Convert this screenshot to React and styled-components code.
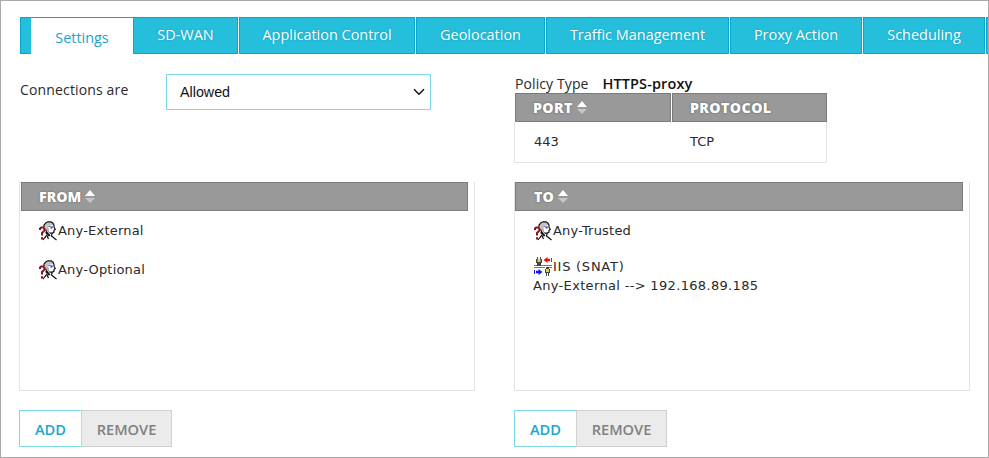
import React from "react";
import styled, { createGlobalStyle } from "styled-components";

const Global = createGlobalStyle`
  * { box-sizing: border-box; }
  body { margin: 0; background: #fff; overflow: hidden; }
`;

const Page = styled.main`
  width: 989px;
  height: 458px;
  border: 1px solid #a9a9a9;
  padding: 16px 0 0 18px;
  overflow: hidden;
  background: #fff;
  color: #2a2a2a;
  font: 14px "Open Sans", sans-serif;
`;

const TabBar = styled.nav`
  display: flex;
  height: 38px;
  padding-left: 1px;
  overflow: hidden;
`;

const TabEdge = styled.span`
  flex: none;
  width: ${(p) => p.$w}px;
  height: 37px;
  background: #26bfdb;
  border: 1px solid #08a5cc;
  border-right: 0;
`;

const Tab = styled.button`
  flex: none;
  width: ${(p) => p.$w}px;
  height: ${(p) => (p.$active ? 38 : 37)}px;
  margin: 0 ${(p) => p.$gap || 0}px 0 0;
  padding: ${(p) => (p.$active ? "1px 0 0" : "0 0 3px 0")};
  border: 1px solid #08a5cc;
  border-width: ${(p) => (p.$active ? "1px 0 0" : "1px")};
  background: ${(p) => (p.$active ? "#fff" : "#26bfdb")};
  color: ${(p) => (p.$active ? "#1aa5c8" : "#fff")};
  font: ${(p) => (p.$active ? 400 : 500)} 14.45px "Open Sans", sans-serif;
  white-space: nowrap;
  text-shadow: ${(p) => (p.$active ? "none" : "0 0 2px #1295b5")};
`;

const Columns = styled.div`
  display: grid;
  grid-template-columns: 495px 456px;
`;

const ConnectionRow = styled.div`
  display: flex;
  height: 127px;
  padding-top: 19px;
`;

const Label = styled.label`
  width: 147px;
  padding-left: 1px;
  line-height: 31px;
  letter-spacing: 0.15px;
`;

const SelectBox = styled.div`
  display: flex;
  align-items: center;
  justify-content: space-between;
  width: 265px;
  height: 36px;
  padding: 0 5px 1px 13px;
  border: 1px solid #7cd8e6;
  color: #111;
  font: 14.3px "Liberation Sans", Arial, sans-serif;
`;

const Policy = styled.div`
  height: 127px;
  padding-top: 20px;
`;

const PolicyType = styled.div`
  display: flex;
  gap: 14px;
  height: 18px;
  padding-left: 1px;
  line-height: 18px;
  letter-spacing: 0.1px;
  strong { font-weight: 600; font-size: 14.5px; color: #111; }
`;

const HeadRow = styled.div`
  display: flex;
  gap: 1px;
  width: ${(p) => p.$w}px;
  height: ${(p) => p.$h}px;
  margin-left: ${(p) => p.$inset || 0}px;
`;

const HeadCell = styled.div`
  display: flex;
  align-items: center;
  gap: 4px;
  width: ${(p) => p.$w};
  padding: 0 0 0 ${(p) => p.$pad}px;
  border: 1px solid #7b7b7b;
  background: #999;
  color: #fff;
  font: 800 14.2px "Open Sans", sans-serif;
  letter-spacing: ${(p) => p.$ls || 0}px;
  text-shadow: 0 0 2px #555;
`;

const PortBody = styled.div`
  display: grid;
  grid-template-columns: 156px 1fr;
  width: 313px;
  height: 41px;
  padding-left: 19px;
  border: 1px solid #e3e3e3;
  border-top: 0;
  line-height: 40px;
  font-family: "DejaVu Sans", Verdana, sans-serif;
  font-size: 13px;
`;

const ListPanel = styled.section`
  width: 456px;
  height: 209px;
  border: 1px solid #e3e3e3;
  border-top: 0;
`;

const Member = styled.div`
  display: flex;
  align-items: center;
  height: ${(p) => p.$h}px;
  padding-left: ${(p) => p.$pad || 19}px;
  font: 13px "DejaVu Sans", Verdana, sans-serif;
  letter-spacing: ${(p) => p.$ls || 0}px;
  white-space: nowrap;
  svg { flex: none; margin-right: 1px; }
`;

const Actions = styled.div`
  display: flex;
  padding-top: 19px;
`;

const ActionButton = styled.button`
  width: ${(p) => (p.$off ? 91 : 63)}px;
  height: 37px;
  margin: 0 0 0 ${(p) => (p.$off ? -1 : 0)}px;
  padding: 0;
  border: 1px solid ${(p) => (p.$off ? "#d0d0d0" : "#7cd8e6")};
  background: ${(p) => (p.$off ? "#ebebeb" : "#fff")};
  color: ${(p) => (p.$off ? "#808080" : "#18a7cd")};
  font: 600 14.6px "Open Sans", sans-serif;
`;

const SortIcon = () => (
  <svg width="10" height="14" viewBox="0 0 10 14">
    <path d="M0 6 5 0l5 6z" fill="#fff" />
    <path d="M0 8h10l-5 5z" fill="#c6c6c6" />
  </svg>
);

const Chevron = () => (
  <svg width="12" height="8" viewBox="0 0 12 8" fill="none" stroke="#111" strokeWidth="1.5">
    <path d="m1 1.3 5 5 5-5" />
  </svg>
);

const AliasIcon = () => (
  <svg width="18" height="20" viewBox="0 0 18 20" fill="none">
    <path d="M5 5.5 7 2l4-1.3L14 2v2l-4 1-1 3-2 2z" fill="#c4c4c4" />
    <path d="M5 6V4l2-2.3L9 .8h3l2 1.4 1 2v2l1.3 2.3-1.3.8v1.8l-1.5 1h-3M6.5 8.5 8 11.5l3 3.5M6.5 11.5l3 2.5M8 14l-2.5 3L4 19M9.5 13.5l-1 2.5 1 2M13 12.5l-.5 2.5 2.5 2 2.5 2" stroke="#111" strokeWidth="1.2" />
    <path d="M9.5 5.5h2M9 7.5v3l2 1.5M14 5v1" stroke="#777" />
    <path d="M11.5 5.5h2v2h-2z" fill="#2435e4" />
    <path d="M1 9V7.5L2.2 6.4h2l1.2 1.2v2L3 12v2.5M3 16.3v2.2" stroke="#8e1118" strokeWidth="2" />
  </svg>
);

const SnatIcon = () => (
  <svg width="18" height="19" viewBox="0 0 18 19">
    <path d="M0 8h18v1H0zM0 10h11v1H0zM15 10h3v1h-3z" fill="#777" />
    <path d="M3 0h1v2H3zM6 0h1v2H6zM2 2h6v4H7v3H3V6H2zM11 12h1v-2h3v2h1v4h-1v3h-1v-3h-1v3h-1v-3h-1z" fill="#444" />
    <path d="M3.5 2h3v3h-3zM12 12h3v3h-3z" fill="#e8d62c" />
    <path d="m9.5 3 4-3v1.7H16v2.6h-2.5V6zM17 1h1v4h-1z" fill="#ef1010" />
    <path d="m8.5 15-4-3v1.7H2v2.6h2.5V18zM0 13h1v4H0z" fill="#0b19ed" />
  </svg>
);

const tabs = [
  ["Settings", 102, 0],
  ["SD-WAN", 105, 1],
  ["Application Control", 176, 1],
  ["Geolocation", 129, 1],
  ["Traffic Management", 183, 1],
  ["Proxy Action", 132, 1],
  ["Scheduling", 122, 1],
];

const Buttons = () => (
  <Actions>
    <ActionButton>ADD</ActionButton>
    <ActionButton $off>REMOVE</ActionButton>
  </Actions>
);

const ListHead = ({ title, inset = 0 }) => (
  <HeadRow $w={448 - inset} $h={29} $inset={inset}>
    <HeadCell $w="100%" $pad={18 - inset}>{title}<SortIcon /></HeadCell>
  </HeadRow>
);

export default function App() {
  return (
    <Page>
      <Global />
      <TabBar>
        <TabEdge $w={11} />
        {tabs.map(([name, w, gap], i) => (
          <Tab key={name} $w={w} $gap={gap} $active={i === 0}>{name}</Tab>
        ))}
        <TabEdge $w={4} />
      </TabBar>
      <Columns>
        <div>
          <ConnectionRow>
            <Label>Connections are</Label>
            <SelectBox>Allowed<Chevron /></SelectBox>
          </ConnectionRow>
          <ListPanel>
            <ListHead title="FROM" inset={1} />
            <Member $h={39} $ls={0.2}><AliasIcon />Any-External</Member>
            <Member $h={39} $ls={0.2}><AliasIcon />Any-Optional</Member>
          </ListPanel>
          <Buttons />
        </div>
        <div>
          <Policy>
            <PolicyType><span>Policy Type</span><strong>HTTPS-proxy</strong></PolicyType>
            <HeadRow $w={312} $h={29} $inset={1}>
              <HeadCell $w="156px" $pad={17} $ls={0.4}>PORT<SortIcon /></HeadCell>
              <HeadCell $w="155px" $pad={17} $ls={0.4}>PROTOCOL</HeadCell>
            </HeadRow>
            <PortBody><span>443</span><span>TCP</span></PortBody>
          </Policy>
          <ListPanel>
            <ListHead title="TO" />
            <Member $h={39} $ls={0.2}><AliasIcon />Any-Trusted</Member>
            <Member $h={32} $ls={0.75}><SnatIcon />IIS (SNAT)</Member>
            <Member $h={7} $pad={18} $ls={0.33}>Any-External --&gt; 192.168.89.185</Member>
          </ListPanel>
          <Buttons />
        </div>
      </Columns>
    </Page>
  );
}
